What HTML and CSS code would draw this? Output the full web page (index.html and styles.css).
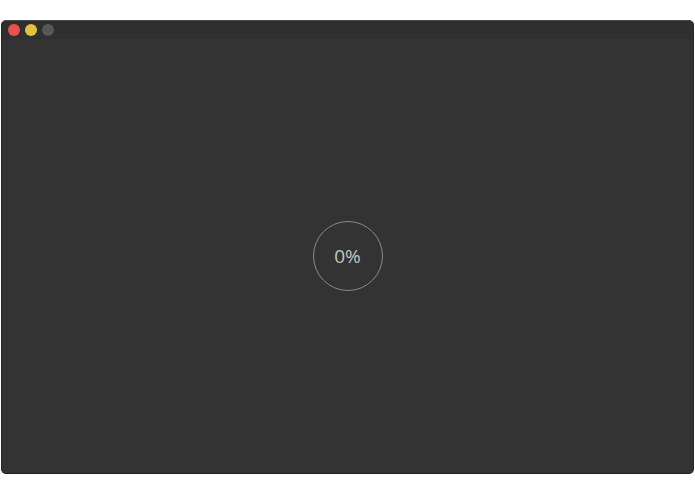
FILE: index.html
```html
<!DOCTYPE html>
<html>
<head>
<meta charset="utf-8">
<link rel="stylesheet" href="styles.css">
</head>
<body>
<div class="window">
  <div class="titlebar">
    <span class="light red"></span>
    <span class="light yellow"></span>
    <span class="light grey"></span>
  </div>
  <div class="content">
    <div class="progress">0%</div>
  </div>
</div>
</body>
</html>
```
FILE: styles.css
```css
html, body {
  margin: 0;
  padding: 0;
  background: #ffffff;
  width: 695px;
  height: 494px;
  overflow: hidden;
}
body {
  padding-top: 20px;
  padding-left: 1px;
  box-sizing: border-box;
}
.window {
  width: 693px;
  height: 454px;
  background: #333333;
  border-top: 1px solid #4a4a4a;
  border-bottom: 1px solid #1e1e1e;
  border-left: 1px solid #262626;
  border-right: 1px solid #262626;
  border-radius: 5px;
  box-sizing: border-box;
  display: flex;
  flex-direction: column;
  overflow: hidden;
}
.titlebar {
  height: 18px;
  background: #2f2f2f;
  display: flex;
  align-items: center;
  gap: 5px;
  padding-left: 6px;
  flex-shrink: 0;
}
.light {
  width: 12px;
  height: 12px;
  border-radius: 50%;
  display: block;
}
.red { background: #e9524f; }
.yellow { background: #e2c13f; }
.grey { background: #575757; }
.content {
  flex: 1;
  display: flex;
  align-items: center;
  justify-content: center;
}
.progress {
  width: 68px;
  height: 68px;
  border: 1.5px solid #8a8a8a;
  border-radius: 50%;
  display: flex;
  align-items: center;
  justify-content: center;
  color: #c4c4c4;
  font-family: "Open Sans", "Liberation Sans", sans-serif;
  font-size: 19px;
}
```
